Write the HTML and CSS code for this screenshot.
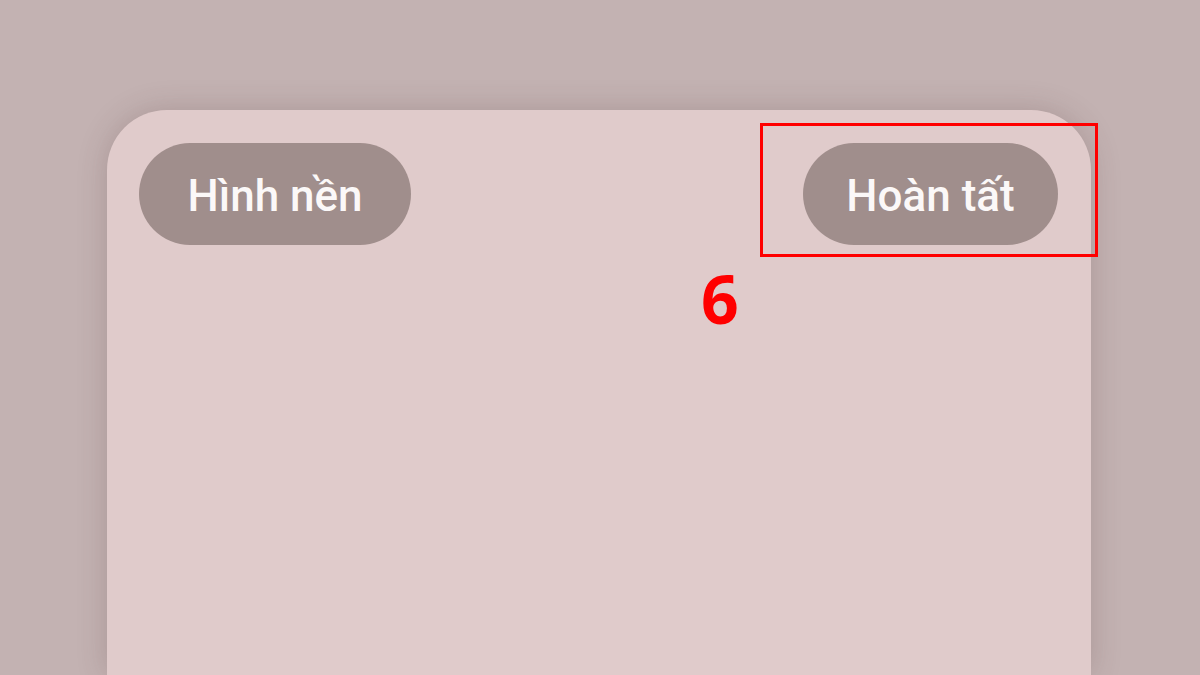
FILE: index.html
```html
<!DOCTYPE html>
<html lang="vi">
<head>
<meta charset="utf-8">
<link rel="stylesheet" href="styles.css">
</head>
<body>
<div class="stage">
  <div class="card">
    <div class="header">
      <div class="pill">Hình nền</div>
      <div class="pill pill-done">Hoàn tất
        <span class="mark-box"></span>
        <span class="mark-num">6</span>
      </div>
    </div>
  </div>
</div>
</body>
</html>
```
FILE: styles.css
```css
html, body {
  margin: 0;
  padding: 0;
  width: 1200px;
  height: 675px;
  overflow: hidden;
}
body {
  background: #c3b2b2;
  font-family: Roboto, "Noto Sans", "Liberation Sans", sans-serif;
}
.stage {
  padding: 110px 0 0 107px;
}
.card {
  width: 984px;
  height: 565px;
  background: #e0cbcb;
  border-radius: 60px 60px 0 0;
  box-shadow: 0 0 30px rgba(80, 50, 50, 0.22);
  padding: 33px 33px 0 32px;
  box-sizing: border-box;
}
.header {
  display: flex;
  justify-content: space-between;
  align-items: center;
}
.pill {
  position: relative;
  height: 102px;
  border-radius: 51px;
  background: #a08e8c;
  color: #fbf8f8;
  font-size: 44px;
  font-weight: 500;
  display: flex;
  align-items: center;
  justify-content: center;
  width: 272px;
  box-sizing: border-box;
  padding-top: 3px;
}
.pill-done {
  width: 255px;
}
.mark-box {
  position: absolute;
  left: -43px;
  right: -40px;
  top: -20px;
  bottom: -12px;
  border: 3px solid #ff0000;
}
.mark-num {
  position: absolute;
  left: -102px;
  top: 122px;
  color: #ff0000;
  font-family: "Open Sans", "Liberation Sans", sans-serif;
  font-weight: 700;
  font-size: 66px;
  line-height: 1;
}
```
